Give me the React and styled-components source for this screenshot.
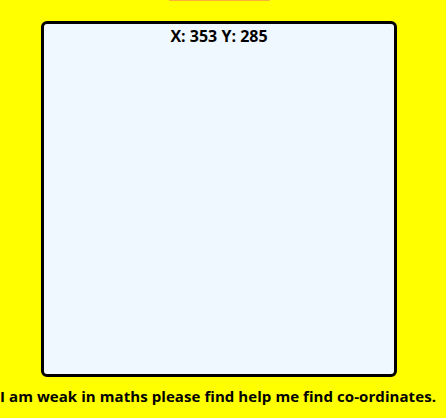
import React from "react";
import styled, { createGlobalStyle } from "styled-components";

const GlobalStyle = createGlobalStyle`
  html, body {
    margin: 0;
    padding: 0;
    background: #ffff00;
  }
  body {
    font-family: "Open Sans", "Noto Sans", sans-serif;
    width: 446px;
    height: 418px;
    overflow: hidden;
  }
`;

const Page = styled.div`
  display: flex;
  flex-direction: column;
  align-items: flex-start;
`;

const Stage = styled.div`
  display: flex;
  flex-direction: column;
  align-items: center;
  width: 356px;
  margin-left: 41px;
`;

const TopButton = styled.div`
  width: 101px;
  height: 1px;
  background: #fbb03b;
  border-radius: 0 0 4px 4px;
  margin-bottom: 20px;
`;

const Board = styled.div`
  width: 350px;
  height: 350px;
  border: 3px solid #000;
  border-radius: 6px;
  background: #f0f8ff;
  display: flex;
  justify-content: center;
  cursor: crosshair;
`;

const Coords = styled.div`
  font-weight: 700;
  font-size: 16px;
  line-height: 20px;
  margin-top: 2px;
  color: #000;
`;

const Note = styled.p`
  margin: 9px 0 0;
  font-weight: 700;
  font-size: 15px;
  line-height: 20px;
  letter-spacing: 0.07px;
  color: #000;
  white-space: nowrap;
`;

export default function App() {
  const [pos, setPos] = React.useState({ x: 353, y: 285 });
  const onMove = (e) => {
    const r = e.currentTarget.getBoundingClientRect();
    setPos({ x: Math.round(e.clientX - r.left), y: Math.round(e.clientY - r.top) });
  };
  return (
    <>
      <GlobalStyle />
      <Page>
        <Stage>
          <TopButton />
          <Board onMouseMove={onMove}>
            <Coords>
              X: {pos.x} Y: {pos.y}
            </Coords>
          </Board>
        </Stage>
        <Note>I am weak in maths please find help me find co-ordinates.</Note>
      </Page>
    </>
  );
}
